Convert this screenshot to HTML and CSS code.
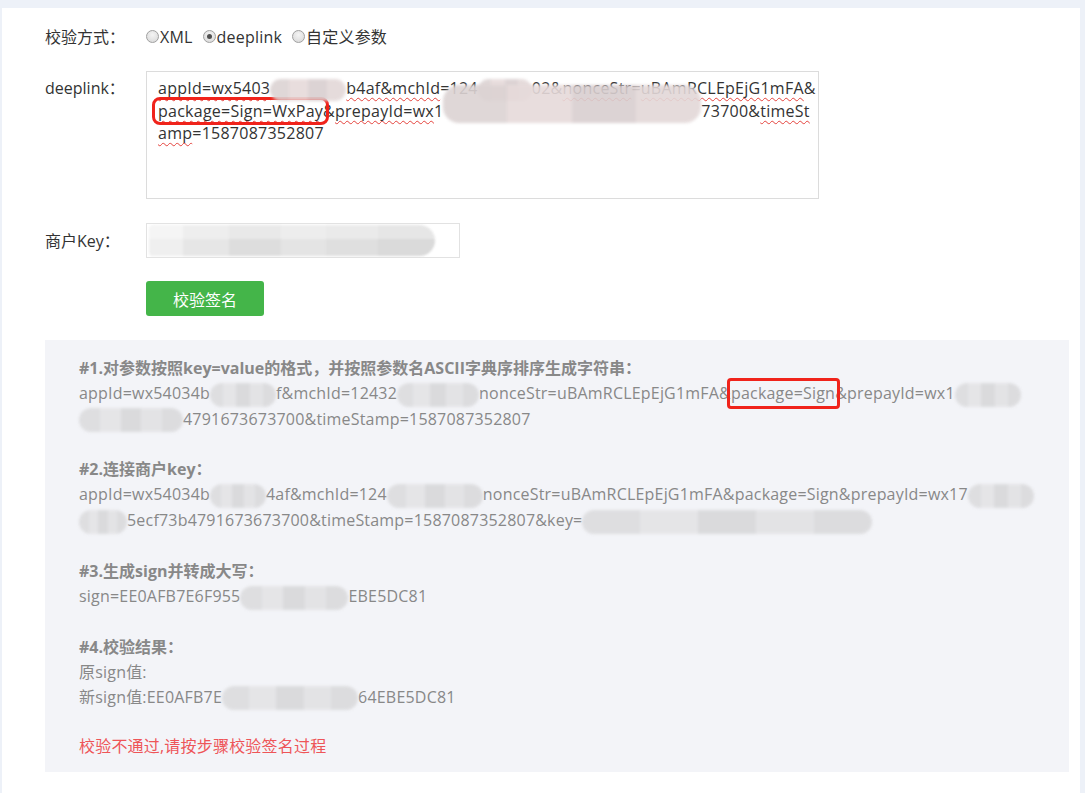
FILE: index.html
```html
<!DOCTYPE html>
<html lang="zh-CN">
<head>
<meta charset="utf-8">
<title>校验签名</title>
<link rel="stylesheet" href="styles.css">
</head>
<body>
<div class="page">
  <div class="row row-mode">
    <div class="label">校验方式：</div>
    <div class="radios">
      <label class="radio"><span class="dot"></span>XML</label>
      <label class="radio"><span class="dot on"></span>deeplink</label>
      <label class="radio"><span class="dot"></span>自定义参数</label>
    </div>
  </div>

  <div class="row row-deeplink">
    <div class="label">deeplink：</div>
    <div class="textarea">
      <div class="tline"><span class="sp">appId=wx5403</span><span class="blur pink" style="width:76px"></span><span class="sp">b4af&amp;mchId</span>=124<span class="blur pink" style="width:54px"></span>02&amp;<span class="sp">nonceStr</span>=<span class="sp">uBAmRCLEpEjG1mFA</span>&amp;</div>
      <div class="tline"><span class="hl"><span class="sp">package=Sign=WxPay</span></span>&amp;<span class="sp">prepayId=wx</span>1<span class="blur pink big" style="width:258px"></span>73700&amp;<span class="sp">timeSt</span></div>
      <div class="tline"><span class="sp">amp</span>=1587087352807</div>
    </div>
  </div>

  <div class="row row-key">
    <div class="label">商户Key：</div>
    <div class="input"><span class="blur key" style="width:286px"></span></div>
  </div>

  <div class="row row-btn">
    <div class="label"></div>
    <button class="btn">校验签名</button>
  </div>

  <div class="result">
    <div class="step">
      <div class="title">#1.对参数按照key=value的格式，并按照参数名ASCII字典序排序生成字符串：</div>
      <div class="line">appId=wx54034b<span class="blur" style="width:66px"></span>f&amp;mchId=12432<span class="blur" style="width:82px"></span>nonceStr=uBAmRCLEpEjG1mFA&amp;<span class="hl2">package=Sign</span>&amp;prepayId=wx1<span class="blur" style="width:66px"></span></div>
      <div class="line"><span class="blur" style="width:104px"></span>4791673673700&amp;timeStamp=1587087352807</div>
    </div>
    <div class="step">
      <div class="title">#2.连接商户key：</div>
      <div class="line">appId=wx54034b<span class="blur" style="width:56px"></span>4af&amp;mchId=124<span class="blur" style="width:96px"></span>nonceStr=uBAmRCLEpEjG1mFA&amp;package=Sign&amp;prepayId=wx17<span class="blur" style="width:66px"></span></div>
      <div class="line"><span class="blur" style="width:48px"></span>5ecf73b4791673673700&amp;timeStamp=1587087352807&amp;key=<span class="blur" style="width:290px"></span></div>
    </div>
    <div class="step">
      <div class="title">#3.生成sign并转成大写：</div>
      <div class="line">sign=EE0AFB7E6F955<span class="blur" style="width:108px"></span>EBE5DC81</div>
    </div>
    <div class="step">
      <div class="title">#4.校验结果：</div>
      <div class="line">原sign值:</div>
      <div class="line">新sign值:EE0AFB7E<span class="blur" style="width:136px"></span>64EBE5DC81</div>
    </div>
    <div class="step step-error">
      <div class="line error">校验不通过,请按步骤校验签名过程</div>
    </div>
  </div>
</div>
</body>
</html>
```

FILE: styles.css
```css
html, body {
  margin: 0;
  padding: 0;
}
body {
  background: #edf1f8;
  font-family: "Open Sans", "Noto Sans CJK SC", sans-serif;
  font-size: 16px;
  color: #333;
}
.page {
  margin: 8px 5px 0 2px;
  background: #fff;
  padding: 17px 11px 22px 43px;
  min-height: 763px;
  box-sizing: border-box;
}
.row {
  display: flex;
  align-items: flex-start;
}
.label {
  width: 101px;
  flex: none;
  line-height: 24px;
  color: #333;
}
.row-mode {
  height: 24px;
}
.radios {
  display: flex;
  align-items: center;
  height: 24px;
  gap: 10px;
  letter-spacing: 0.2px;
}
.radio {
  display: flex;
  align-items: center;
  line-height: 24px;
}
.dot {
  width: 13px;
  height: 13px;
  border-radius: 50%;
  border: 1px solid #a0a0a0;
  background: radial-gradient(circle at 50% 35%, #f4f4f4, #d6d6d6);
  margin-right: 1px;
  box-sizing: border-box;
  position: relative;
  top: -1px;
}
.dot.on::after {
  content: "";
  position: absolute;
  left: 3px;
  top: 3px;
  width: 5px;
  height: 5px;
  border-radius: 50%;
  background: #505050;
}

.row-deeplink {
  margin-top: 22px;
}
.row-deeplink .label {
  padding-top: 5px;
}
.textarea {
  width: 673px;
  height: 128px;
  box-sizing: border-box;
  border: 1px solid #dcdcdc;
  padding: 6px 4px 0 11px;
  line-height: 20.5px;
  color: #333;
  white-space: nowrap;
  letter-spacing: 0.25px;
}
.sp {
  text-decoration: underline wavy #e4423c;
  text-decoration-thickness: 1px;
  text-underline-offset: 3px;
  text-decoration-skip-ink: none;
}
.hl {
  outline: 3px solid #f0231b;
  outline-offset: 0;
  border-radius: 5px;
  padding: 0 3px;
  margin: 0 -3px 0 -3px;
}

.blur {
  display: inline-block;
  height: 24px;
  vertical-align: middle;
  border-radius: 12px;
  background:
    linear-gradient(90deg, #dcdcde 0 20%, #e4e4e6 20% 40%, #d8d8da 40% 60%, #e2e2e4 60% 80%, #dadadc 80% 100%);
  filter: blur(1.5px);
  opacity: 0.9;
}
.blur.pink {
  background: linear-gradient(90deg, #dcd3d3 0 25%, #e6dada 25% 50%, #d9cfd0 50% 75%, #e3d8d8 75% 100%);
  height: 22px;
}
.blur.big {
  height: 38px;
  margin-top: -16px;
  border-radius: 16px;
}

.row-key {
  margin-top: 24px;
}
.row-key .label {
  padding-top: 6px;
}
.input {
  width: 314px;
  height: 35px;
  box-sizing: border-box;
  border: 1px solid #e2e2e2;
  padding: 1px 0 0 2px;
}
.blur.key {
  height: 31px;
  vertical-align: top;
  background:
    linear-gradient(180deg, rgba(255,255,255,0.35) 0 45%, rgba(255,255,255,0) 45% 100%),
    linear-gradient(90deg, #eeeeee 0 12%, #e4e4e4 12% 28%, #dadada 28% 46%, #e2e2e2 46% 62%, #dcdcdc 62% 80%, #d6d6d6 80% 100%);
  border-radius: 4px 16px 16px 4px;
  filter: blur(1px);
}

.row-btn {
  margin-top: 23px;
}
.btn {
  width: 118px;
  height: 35px;
  border: none;
  border-radius: 3px;
  background: #44b549;
  color: #fff;
  font-family: "Noto Sans CJK SC", sans-serif;
  font-size: 16px;
  padding: 0;
  cursor: pointer;
}

.result {
  margin-top: 24px;
  background: #f3f4f8;
  padding: 16px 34px 13px;
  color: #888;
  line-height: 25px;
  letter-spacing: 0.2px;
}
.title {
  letter-spacing: 0;
  font-weight: bold;
}
.step + .step {
  margin-top: 25px;
}
.step.step-error {
  margin-top: 24px;
}
.line {
  white-space: nowrap;
}
.hl2 {
  position: relative;
}
.hl2::after {
  content: "";
  position: absolute;
  left: -4px;
  right: -5px;
  top: -4px;
  bottom: -5px;
  border: 3px solid #f0231b;
  border-radius: 4px;
}
.error {
  color: #ee5558;
}
```
